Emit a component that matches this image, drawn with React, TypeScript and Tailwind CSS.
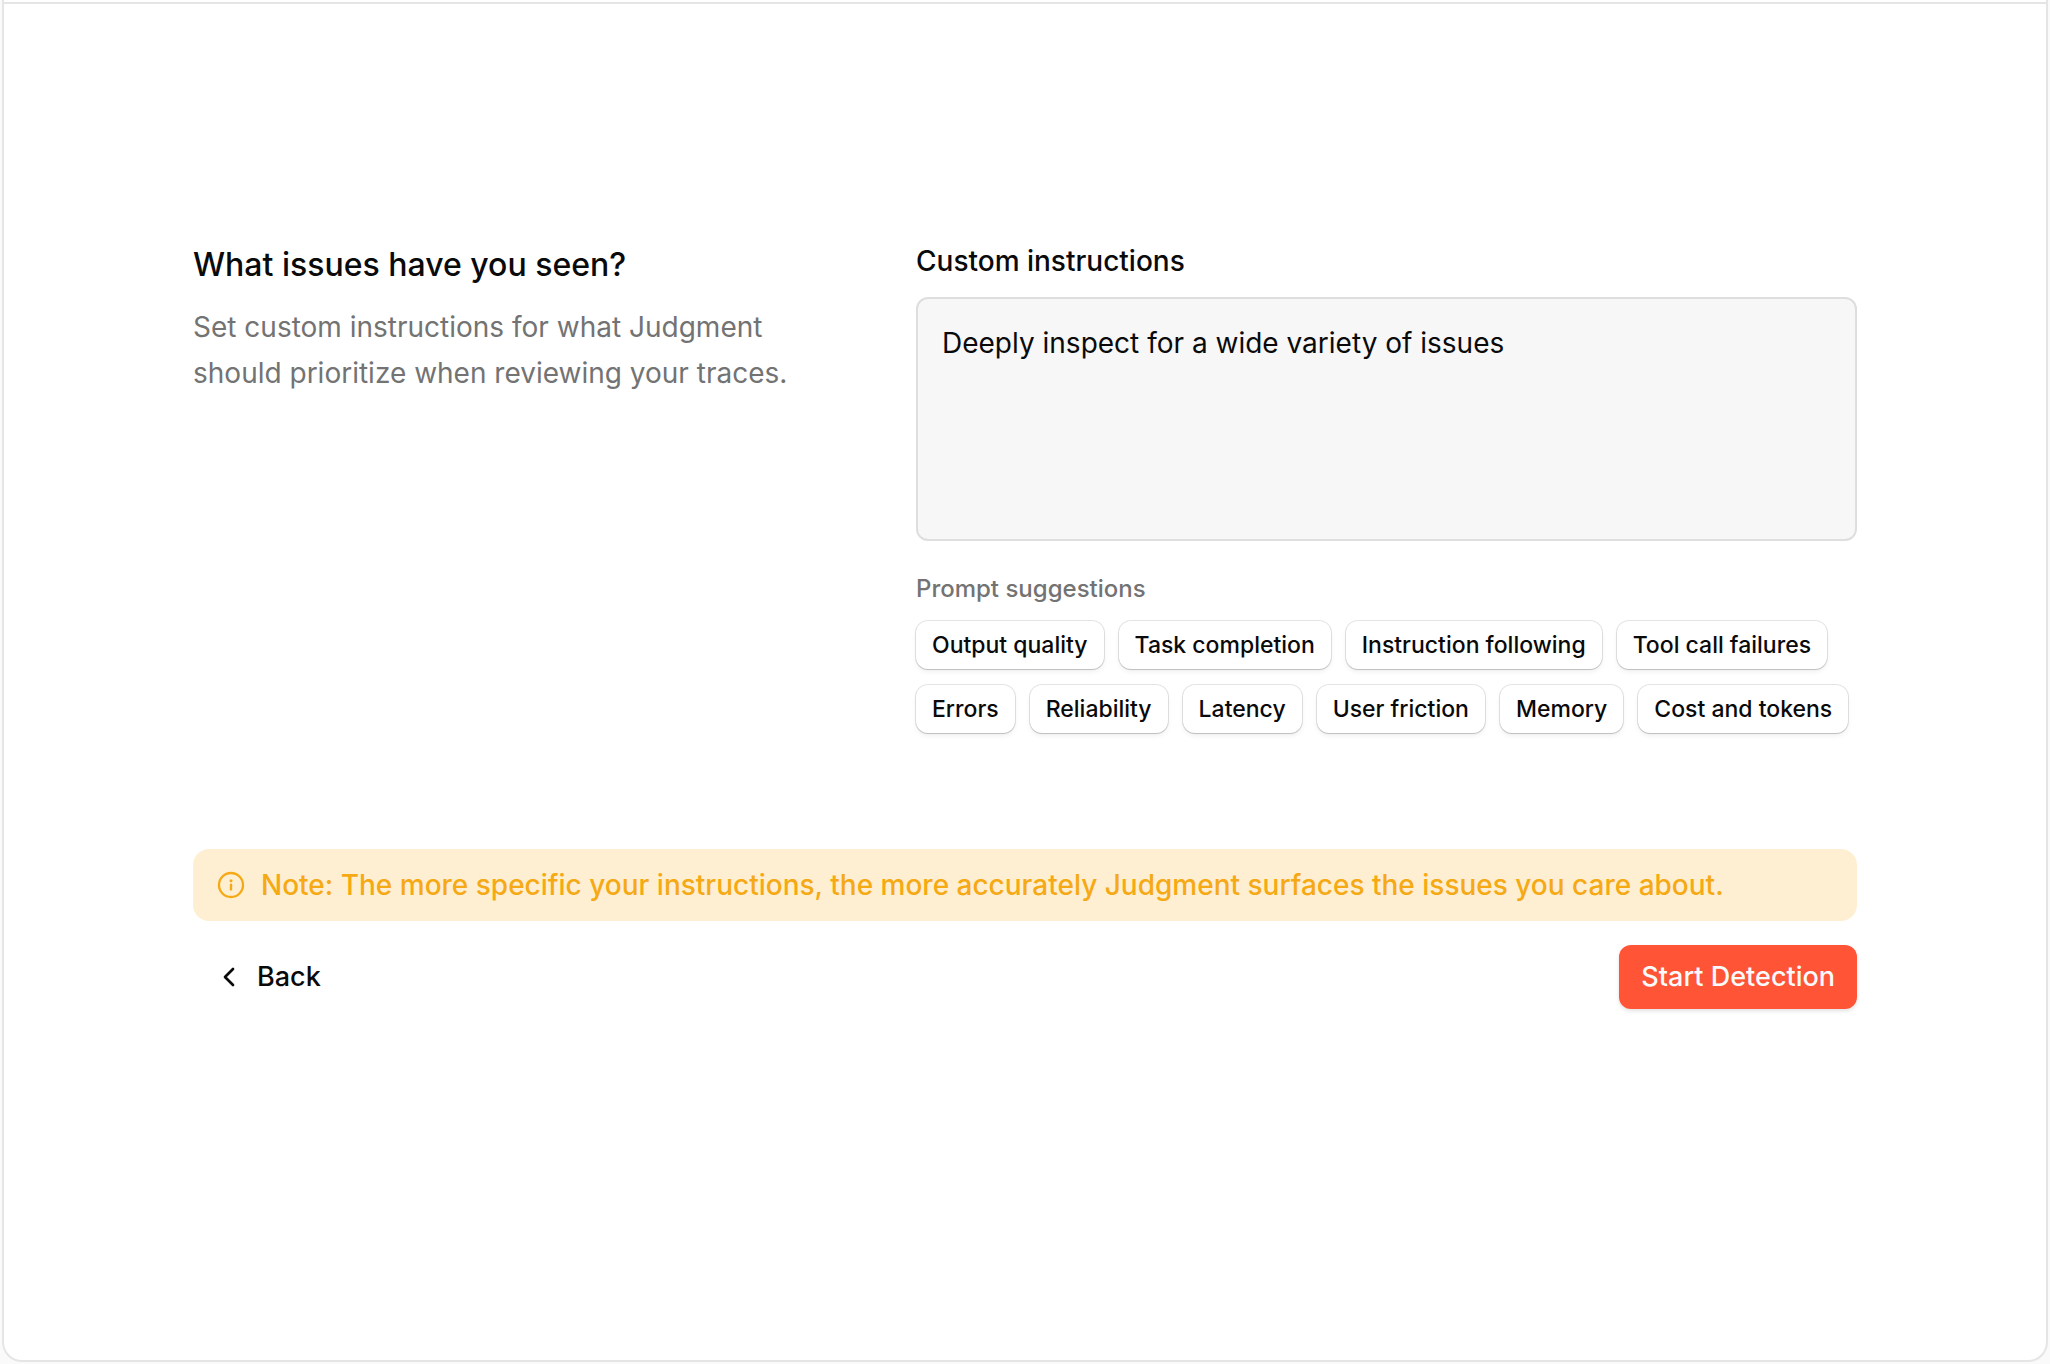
import React from "react";

const rows = [
  ["Output quality", "Task completion", "Instruction following", "Tool call failures"],
  ["Errors", "Reliability", "Latency", "User friction", "Memory", "Cost and tokens"],
];

function InfoIcon() {
  return (
    <svg aria-hidden="true" viewBox="0 0 32 32" className="size-8 shrink-0" fill="none" stroke="currentColor">
      <circle cx="16" cy="16" r="12" strokeWidth="2.3" />
      <path d="M16 15.8v4.6" strokeWidth="2.4" strokeLinecap="round" />
      <circle cx="16" cy="11.8" r="1.5" fill="currentColor" stroke="none" />
    </svg>
  );
}

function ChevronLeftIcon() {
  return (
    <svg aria-hidden="true" viewBox="0 0 24 24" className="size-8 shrink-0" fill="none" stroke="currentColor" strokeWidth="2" strokeLinecap="round" strokeLinejoin="round">
      <path d="m15 18-6-6 6-6" />
    </svg>
  );
}

export default function App() {
  return (
    <div className="flex min-h-screen flex-col bg-[#fafafa] px-0.5 pb-0.5 font-['Inter',sans-serif] text-[#0a0a0a]">
      <main className="flex flex-1 flex-col rounded-b-[20px] border-2 border-t-0 border-[#e5e5e5] bg-white">
        <div className="h-1 border-b-2 border-[#e5e5e5]" />
        <div className="px-[189px] pt-[237px]">
          <div className="flex items-start justify-between">
            <section className="w-[620px] pt-1">
              <h1 className="text-[32px] leading-[40px] font-medium">What issues have you seen?</h1>
              <p className="mt-[19px] text-[28px] leading-[46px] text-[#737373]">
                Set custom instructions for what Judgment should prioritize when reviewing your traces.
              </p>
            </section>
            <section className="w-[941px]">
              <label htmlFor="instructions" className="block text-[28px] leading-[40px] font-medium">
                Custom instructions
              </label>
              <textarea
                id="instructions"
                defaultValue="Deeply inspect for a wide variety of issues"
                className="mt-4 block h-[244px] w-full resize-none rounded-[12px] border-2 border-[#dedede] bg-[#f7f7f7] px-6 py-6 text-[28px] leading-[40px] outline-none"
              />
              <h2 className="mt-8 text-[24px] leading-[32px] font-medium text-[#737373]">Prompt suggestions</h2>
              <div className="mt-4 flex flex-col gap-4">
                {rows.map((row) => (
                  <div key={row[0]} className="flex gap-[15px]">
                    {row.map((s) => (
                      <button
                        key={s}
                        type="button"
                        className="h-12 rounded-[12px] bg-white px-4 text-[23px] font-medium whitespace-nowrap shadow-[0_0_0_1px_rgba(0,0,0,0.1),0_1px_1px_0px_rgba(0,0,0,0.12),0_3px_5px_rgba(0,0,0,0.06)]"
                      >
                        {s}
                      </button>
                    ))}
                  </div>
                ))}
              </div>
            </section>
          </div>
          <p className="mt-[116px] flex h-[72px] items-center gap-3.5 rounded-[16px] bg-[#ffefd2] px-[22px] text-[28px] font-medium text-[#f5a914]">
            <InfoIcon />
            Note: The more specific your instructions, the more accurately Judgment surfaces the issues you care about.
          </p>
          <div className="mt-6 flex items-center justify-between">
            <button type="button" className="flex h-16 items-center gap-3 rounded-[12px] px-5 text-[27px] font-medium">
              <ChevronLeftIcon />
              Back
            </button>
            <button
              type="button"
              className="h-16 rounded-[12px] bg-[#ff5436] px-[22px] text-[27px] font-medium text-[#fafafa] shadow-[0_2px_4px_rgba(0,0,0,0.12)]"
            >
              Start Detection
            </button>
          </div>
        </div>
      </main>
    </div>
  );
}
